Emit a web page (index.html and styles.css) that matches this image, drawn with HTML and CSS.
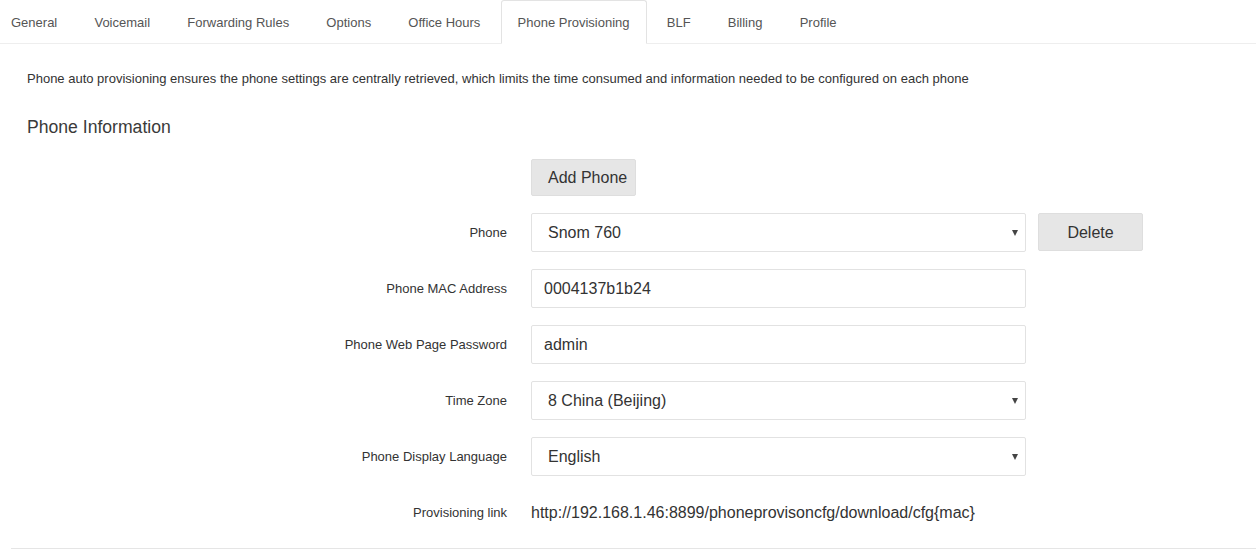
FILE: index.html
```html
<!DOCTYPE html>
<html>
	<head>
		<meta charset="utf-8" />
		<title>Phone Provisioning</title>
		<link rel="stylesheet" href="styles.css">
	</head>
	<body>
		<ul class="tabs">
			<li><a href="#">General</a></li>
			<li><a href="#">Voicemail</a></li>
			<li><a href="#">Forwarding Rules</a></li>
			<li><a href="#">Options</a></li>
			<li><a href="#">Office Hours</a></li>
			<li class="active"><a href="#">Phone Provisioning</a></li>
			<li><a href="#">BLF</a></li>
			<li><a href="#">Billing</a></li>
			<li><a href="#">Profile</a></li>
		</ul>

		<div class="tab-content">
			<div class="panel">
				<p class="descripcion">Phone auto provisioning ensures the phone settings are centrally retrieved, which limits the time consumed and information needed to be configured on each phone</p>
				<h3 class="titulo">Phone Information</h3>

				<form action="#" class="formulario">
					<div class="fila fila-boton">
						<span></span>
						<div><button type="button" class="boton boton-add">Add Phone</button></div>
					</div>
					<div class="fila">
						<label>Phone</label>
						<div class="select-wrap">
							<select class="campo"><option>Snom 760</option></select>
						</div>
						<button type="button" class="boton boton-delete">Delete</button>
					</div>
					<div class="fila">
						<label>Phone MAC Address</label>
						<input type="text" class="campo" value="0004137b1b24" />
					</div>
					<div class="fila">
						<label>Phone Web Page Password</label>
						<input type="text" class="campo" value="admin" />
					</div>
					<div class="fila">
						<label>Time Zone</label>
						<div class="select-wrap">
							<select class="campo"><option>8 China (Beijing)</option></select>
						</div>
					</div>
					<div class="fila">
						<label>Phone Display Language</label>
						<div class="select-wrap">
							<select class="campo"><option>English</option></select>
						</div>
					</div>
					<div class="fila">
						<label>Provisioning link</label>
						<span class="enlace">http://192.168.1.46:8899/phoneprovisoncfg/download/cfg{mac}</span>
					</div>
				</form>
			</div>
		</div>
	</body>
</html>
```

FILE: styles.css
```css
* {
	margin: 0;
	padding: 0;
	box-sizing: border-box;
}
body {
	font-family: "Liberation Sans", Arial, sans-serif;
	color: #333;
	background-color: #fff;
}

/* pestañas */
.tabs {
	display: flex;
	list-style: none;
	margin-left: -6px;
	border-bottom: 1px solid #eee;
}
.tabs li {
	margin-right: 3.2px;
	margin-bottom: -1px;
}
.tabs a {
	display: block;
	padding: 1px 16px 0;
	line-height: 41px;
	font-size: 13px;
	color: #555;
	text-decoration: none;
	border: 1px solid transparent;
	border-radius: 3px 3px 0 0;
}
.tabs .active a {
	border-color: #e3e3e3;
	border-bottom-color: #fff;
	background-color: #fff;
}

.tab-content {
	padding-left: 11px;
}
.panel {
	padding: 26px 0 16px 16px;
	border-bottom: 1px solid #e5e5e5;
}

.descripcion {
	font-size: 13px;
	line-height: 17px;
}
.titulo {
	margin-top: 28px;
	font-size: 17.6px;
	font-weight: normal;
	line-height: 24px;
	color: #3a3a3a;
}

/* formulario */
.formulario {
	margin-top: 20px;
}
.fila {
	display: grid;
	grid-template-columns: 480px 495px auto;
	column-gap: 24px;
	align-items: center;
	margin-bottom: 17px;
}
.fila:last-child {
	margin-bottom: 0;
	height: 39px;
}
.fila label {
	text-align: right;
	font-size: 13px;
	color: #333;
}

.campo {
	display: block;
	width: 495px;
	height: 39px;
	border: 1px solid #e2e2e2;
	border-radius: 2px;
	background-color: #fff;
	font-family: "Liberation Sans", Arial, sans-serif;
	font-size: 16px;
	color: #333;
	padding: 0 12px;
	outline: none;
}
select.campo {
	-webkit-appearance: none;
	appearance: none;
	padding: 0 16px;
}
.select-wrap {
	position: relative;
	width: 495px;
}
.select-wrap::after {
	content: "";
	position: absolute;
	right: 8px;
	top: 17px;
	border-left: 3px solid transparent;
	border-right: 3px solid transparent;
	border-top: 6px solid #444;
}

.boton {
	width: 105px;
	background-color: #e6e6e6;
	border: 1px solid #dedede;
	border-radius: 2px;
	font-family: "Liberation Sans", Arial, sans-serif;
	font-size: 16px;
	color: #333;
}
.boton-add {
	height: 37px;
	text-align: left;
	padding-left: 16px;
}
.boton-delete {
	height: 38px;
	padding-top: 1px;
	margin-left: -12px;
	justify-self: start;
	align-self: start;
}

.enlace {
	font-size: 16px;
	color: #333;
}
```
